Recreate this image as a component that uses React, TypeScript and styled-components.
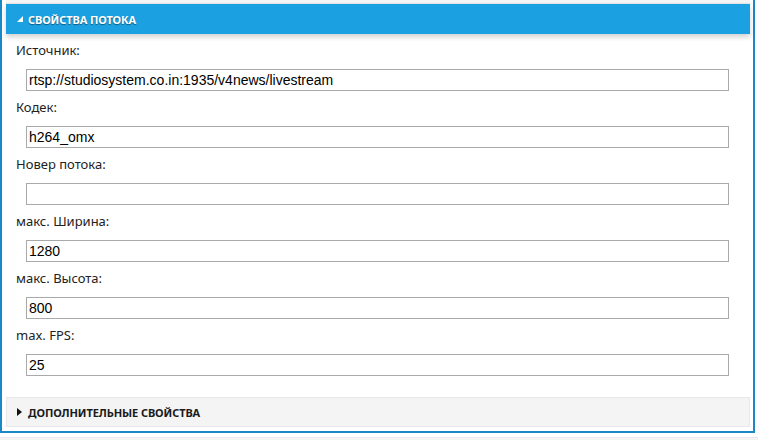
import styled, { createGlobalStyle } from 'styled-components';

const GlobalStyle = createGlobalStyle`
  html, body {
    margin: 0;
    padding: 0;
    background: #ffffff;
  }
  body {
    font-family: 'Noto Sans', 'Open Sans', sans-serif;
  }
`;

const Page = styled.div`
  width: 760px;
  height: 440px;
  overflow: hidden;
`;

const Frame = styled.div`
  width: 755px;
  box-sizing: border-box;
  border: 2px solid #1a87c8;
  border-top: none;
  padding: 0 3px 4px 4px;
`;

const PrevPanel = styled.div`
  height: 3px;
  background: #f4f4f4;
  border-bottom: 1px solid #e6e6e6;
`;

const Header = styled.div`
  height: 30px;
  background: #1ba1e2;
  display: flex;
  align-items: center;
  gap: 5px;
  padding-left: 11px;
  box-shadow: 0 3px 5px rgba(0, 0, 0, 0.18);
  position: relative;
`;

const HeaderTitle = styled.span<{ $dark?: boolean }>`
  font-family: 'Noto Sans', 'Open Sans', sans-serif;
  font-size: 11px;
  font-weight: 700;
  letter-spacing: -0.1px;
  color: ${(p) => (p.$dark ? '#1a1a1a' : '#ffffff')};
  text-shadow: ${(p) => (p.$dark ? 'none' : '0 1px 1px rgba(0, 0, 0, 0.45)')};
`;

const Body = styled.div`
  padding: 6px 21px 15px 10px;
`;

const Field = styled.div`
  display: flex;
  flex-direction: column;
  margin-bottom: 6px;
`;

const Label = styled.label`
  height: 20px;
  line-height: 21px;
  font-size: 13px;
  color: #222;
  margin-bottom: 9px;
`;

const Input = styled.input`
  margin-left: 10px;
  height: 22px;
  box-sizing: border-box;
  border: 1px solid #a9a9a9;
  padding: 0 2px;
  font-family: 'Liberation Sans', Arial, sans-serif;
  font-size: 14px;
  color: #000;
  outline: none;
  background: #fff;
`;

const Collapsed = styled.div`
  height: 30px;
  box-sizing: border-box;
  background: #f4f4f4;
  border: 1px solid #e8e8e8;
  display: flex;
  align-items: center;
  gap: 6px;
  padding-left: 10px;
`;

const NextPanel = styled.div`
  margin-top: 4px;
  height: 4px;
  width: 758px;
  background: #f4f4f4;
  border-top: 1px solid #eaeaea;
`;

const TriangleDown = () => (
  <svg width="6" height="6" viewBox="0 0 6 6">
    <polygon points="6,0 6,6 0,6" fill="#ffffff" />
  </svg>
);

const TriangleRight = () => (
  <svg width="5" height="8" viewBox="0 0 5 8">
    <polygon points="0,0 5,4 0,8" fill="#111111" />
  </svg>
);

const fields = [
  { label: 'Источник:', value: 'rtsp://studiosystem.co.in:1935/v4news/livestream' },
  { label: 'Кодек:', value: 'h264_omx' },
  { label: 'Новер потока:', value: '' },
  { label: 'макс. Ширина:', value: '1280' },
  { label: 'макс. Высота:', value: '800' },
  { label: 'max. FPS:', value: '25' },
];

const App = () => {
  return (
    <Page>
      <GlobalStyle />
      <Frame>
        <PrevPanel />
        <Header>
          <TriangleDown />
          <HeaderTitle>СВОЙСТВА ПОТОКА</HeaderTitle>
        </Header>
        <Body>
          {fields.map((f) => (
            <Field key={f.label}>
              <Label>{f.label}</Label>
              <Input defaultValue={f.value} />
            </Field>
          ))}
        </Body>
        <Collapsed>
          <TriangleRight />
          <HeaderTitle $dark>ДОПОЛНИТЕЛЬНЫЕ СВОЙСТВА</HeaderTitle>
        </Collapsed>
      </Frame>
      <NextPanel />
    </Page>
  );
};

export default App;
